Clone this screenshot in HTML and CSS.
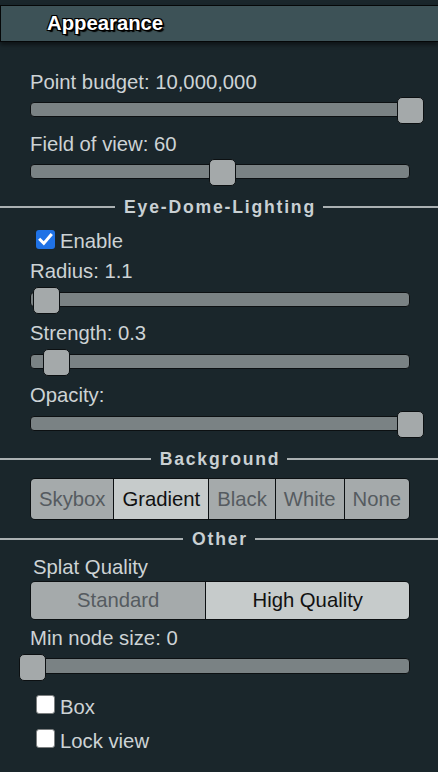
FILE: index.html
```html
<!DOCTYPE html>
<html>
<head>
<meta charset="utf-8">
<link rel="stylesheet" href="styles.css">
</head>
<body>
<div class="panel">
  <h3 class="header">Appearance</h3>

  <div class="group group-first">
    <div class="label">Point budget: 10,000,000</div>
    <div class="slider"><span class="thumb" style="left: 100%"></span></div>
    <div class="label">Field of view: 60</div>
    <div class="slider"><span class="thumb" style="left: 50.2%"></span></div>
  </div>

  <div class="divider divider-a"><span class="divider-text">Eye-Dome-Lighting</span></div>

  <div class="group">
    <label class="check check-enable">
      <span class="box checked"><svg viewBox="0 0 19 19" width="19" height="19"><polyline points="4.2,9.8 7.8,13.4 14.8,5.2" fill="none" stroke="#fff" stroke-width="3" stroke-linecap="square"/></svg></span>
      <span class="check-text">Enable</span>
    </label>
    <div class="label label-tight">Radius: 1.1</div>
    <div class="slider"><span class="thumb" style="left: 3.8%"></span></div>
    <div class="label">Strength: 0.3</div>
    <div class="slider"><span class="thumb" style="left: 6.4%"></span></div>
    <div class="label">Opacity:</div>
    <div class="slider"><span class="thumb" style="left: 100%"></span></div>
  </div>

  <div class="divider divider-b"><span class="divider-text">Background</span></div>

  <div class="group">
    <div class="buttonset bg-set">
      <span class="btn">Skybox</span>
      <span class="btn active">Gradient</span>
      <span class="btn">Black</span>
      <span class="btn">White</span>
      <span class="btn">None</span>
    </div>
  </div>

  <div class="divider divider-c"><span class="divider-text">Other</span></div>

  <div class="group">
    <div class="label label-indent">Splat Quality</div>
    <div class="buttonset quality-set">
      <span class="btn">Standard</span>
      <span class="btn active">High Quality</span>
    </div>
    <div class="label label-min">Min node size: 0</div>
    <div class="slider slider-min"><span class="thumb" style="left: 0%"></span></div>
    <label class="check check-box">
      <span class="box"></span>
      <span class="check-text">Box</span>
    </label>
    <label class="check check-lock">
      <span class="box"></span>
      <span class="check-text">Lock view</span>
    </label>
  </div>
</div>
</body>
</html>
```

FILE: styles.css
```css
html, body {
  margin: 0;
  padding: 0;
  background: #1a262b;
}

body {
  width: 438px;
  height: 772px;
  overflow: hidden;
  font-family: "Liberation Sans", Arial, sans-serif;
  font-size: 20.3px;
  color: #cdd3d5;
}

.panel {
  padding-top: 5px;
}

.header {
  margin: 0;
  height: 35px;
  line-height: 35px;
  padding-left: 46px;
  background: #3d5257;
  border: 1px solid #050708;
  border-right: none;
  font-size: 20.3px;
  font-weight: bold;
  color: #ffffff;
  text-shadow: -1px -1px 0 #000, 1px -1px 0 #000, -1px 1px 0 #000, 1px 1px 0 #000, 2px 2px 1px #000;
  box-shadow: 0 3px 4px rgba(0, 0, 0, 0.45);
}

.group {
  display: flow-root;
  padding: 0 28px 0 30px;
}

.group-first {
  padding-top: 28.5px;
}

.label {
  line-height: 23px;
  height: 23px;
  white-space: nowrap;
}

.label-tight {
  margin-top: 7px;
}

.label-indent {
  padding-left: 3px;
  margin-top: 7.6px;
}

.label-min {
  margin-top: 7.5px;
}

.slider {
  position: relative;
  height: 13px;
  margin: 8.5px 0 15.5px;
  background: #7a8284;
  border: 1px solid #0c1012;
  border-radius: 4px;
}

.slider-min {
  margin: 8.1px 0 0;
  height: 14px;
}

.thumb {
  position: absolute;
  top: -6px;
  width: 25px;
  height: 25px;
  margin-left: -12px;
  background: #a4a9aa;
  border: 1px solid #0c1012;
  border-radius: 5px;
}

.slider-min .thumb {
  top: -5.5px;
}

.divider {
  display: flex;
  align-items: center;
  height: 20px;
}

.divider::before,
.divider::after {
  content: "";
  flex: 1;
  height: 2px;
  background: #aab0b2;
}

.divider-text {
  margin: 0 7px 0 9px;
  font-size: 17.6px;
  line-height: 20px;
  font-weight: bold;
  letter-spacing: 1.8px;
  color: #c9d0d3;
}

.divider-a {
  margin-top: 2.7px;
}

.divider-b {
  margin-top: 2.4px;
}

.divider-c {
  margin-top: 9.2px;
}

.check {
  display: flex;
  align-items: flex-start;
  height: 23px;
  line-height: 23px;
  padding-left: 6px;
}

.box {
  box-sizing: border-box;
  width: 19px;
  height: 19px;
  margin-top: 0;
  margin-right: 5px;
  background: #ffffff;
  border: 1.5px solid #7c7f80;
  border-radius: 3px;
  flex: none;
}

.box.checked {
  background: #1f72e6;
  border: none;
}

.box svg {
  display: block;
}

.check-enable {
  margin-top: 13.3px;
}

.check-box {
  margin-top: 21.6px;
}

.check-box .box,
.check-lock .box {
  margin-top: -1px;
}

.check-lock {
  margin-top: 11px;
}

.buttonset {
  display: flex;
  box-sizing: border-box;
  border: 1px solid #0c1012;
  border-radius: 5px;
  overflow: hidden;
}

.btn {
  flex: 1 1 auto;
  text-align: center;
  white-space: nowrap;
  background: #a5aaab;
  color: #555b60;
}

.btn + .btn {
  border-left: 1px solid #0c1012;
}

.btn.active {
  background: #c6cbcb;
  color: #111111;
}

.bg-set {
  margin-top: 8.8px;
  height: 42px;
}

.bg-set .btn {
  line-height: 40px;
}

.quality-set {
  margin-top: 1.2px;
  height: 39px;
}

.quality-set .btn {
  line-height: 37px;
}
```
